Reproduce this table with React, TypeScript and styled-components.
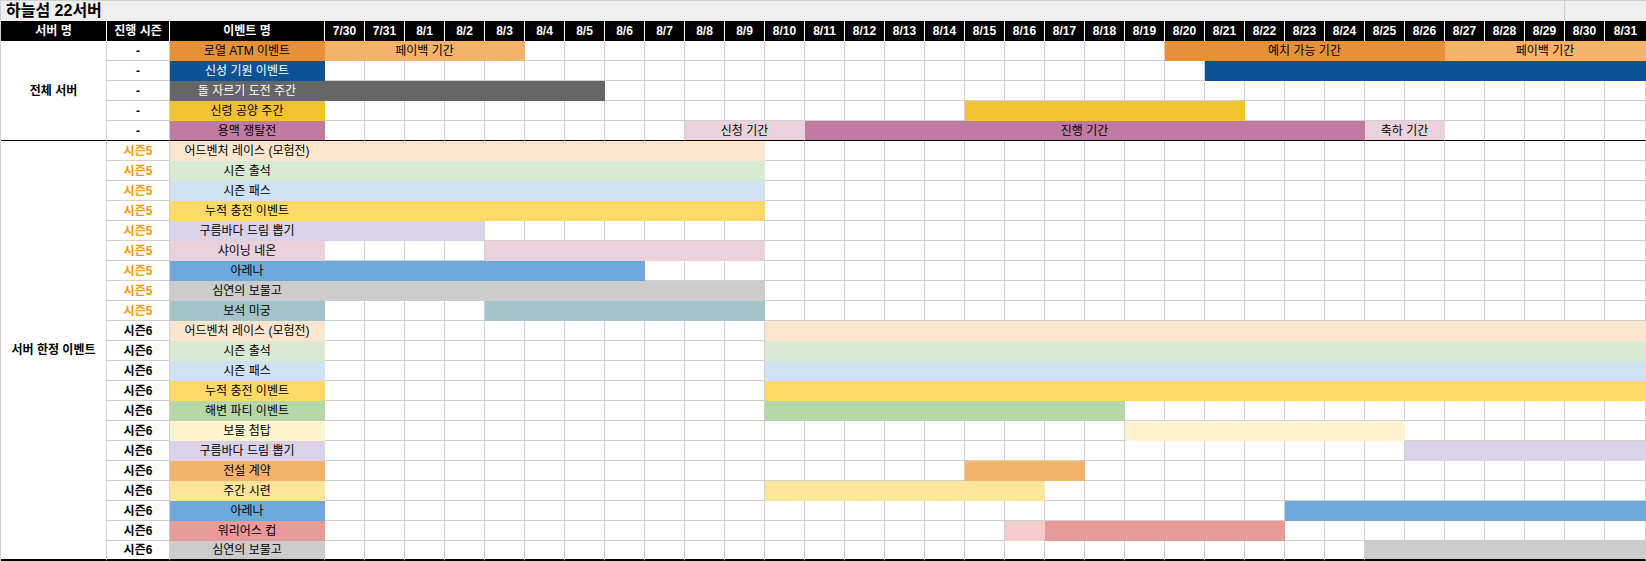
import React from 'react'
import styled, { createGlobalStyle } from 'styled-components'

const DAYS = ['7/30', '7/31', ...Array.from({ length: 31 }, (_, i) => `8/${i + 1}`)]
const at = (day: string) => DAYS.indexOf(day)

const GRID = '#d0d0d0'
const SHEET_COLUMNS = '106px 63px 155px repeat(32, 40px) 41px'
const ROW_COLUMNS = '63px 155px repeat(32, 40px) 41px'

type Span = { from: number; to: number; color: string; label?: string }
type EventRow = { season: string; name: string; color: string; dark?: boolean; spans: Span[] }
type Section = { title: string; events: EventRow[] }

const seg = (from: string, to: string, color: string, label?: string): Span => ({
  from: at(from),
  to: at(to),
  color,
  label,
})

const S5_FULL = (color: string) => [seg('7/30', '8/9', color)]
const S6_FULL = (color: string) => [seg('8/10', '8/31', color)]

const SECTIONS: Section[] = [
  {
    title: '전체 서버',
    events: [
      {
        season: '-',
        name: '로열 ATM 이벤트',
        color: '#e69138',
        spans: [
          seg('7/30', '8/3', '#f6b26b', '페이백 기간'),
          seg('8/20', '8/26', '#e69138', '예치 가능 기간'),
          seg('8/27', '8/31', '#f6b26b', '페이백 기간'),
        ],
      },
      { season: '-', name: '신성 기원 이벤트', color: '#0b5394', dark: true, spans: [seg('8/21', '8/31', '#0b5394')] },
      { season: '-', name: '돌 자르기 도전 주간', color: '#666666', dark: true, spans: [seg('7/30', '8/5', '#666666')] },
      { season: '-', name: '신령 공양 주간', color: '#f1c232', spans: [seg('8/15', '8/21', '#f1c232')] },
      {
        season: '-',
        name: '용맥 쟁탈전',
        color: '#c27ba0',
        spans: [
          seg('8/8', '8/10', '#ead1dc', '신청 기간'),
          seg('8/11', '8/24', '#c27ba0', '진행 기간'),
          seg('8/25', '8/26', '#ead1dc', '축하 기간'),
        ],
      },
    ],
  },
  {
    title: '서버 한정 이벤트',
    events: [
      { season: '시즌5', name: '어드벤처 레이스 (모험전)', color: '#fce5cd', spans: S5_FULL('#fce5cd') },
      { season: '시즌5', name: '시즌 출석', color: '#d9ead3', spans: S5_FULL('#d9ead3') },
      { season: '시즌5', name: '시즌 패스', color: '#cfe2f3', spans: S5_FULL('#cfe2f3') },
      { season: '시즌5', name: '누적 충전 이벤트', color: '#ffd966', spans: S5_FULL('#ffd966') },
      { season: '시즌5', name: '구름바다 드림 뽑기', color: '#d9d2e9', spans: [seg('7/30', '8/2', '#d9d2e9')] },
      { season: '시즌5', name: '샤이닝 네온', color: '#ead1dc', spans: [seg('8/3', '8/9', '#ead1dc')] },
      { season: '시즌5', name: '아레나', color: '#6fa8dc', spans: [seg('7/30', '8/6', '#6fa8dc')] },
      { season: '시즌5', name: '심연의 보물고', color: '#cccccc', spans: S5_FULL('#cccccc') },
      { season: '시즌5', name: '보석 미궁', color: '#a2c4c9', spans: [seg('8/3', '8/9', '#a2c4c9')] },
      { season: '시즌6', name: '어드벤처 레이스 (모험전)', color: '#fce5cd', spans: S6_FULL('#fce5cd') },
      { season: '시즌6', name: '시즌 출석', color: '#d9ead3', spans: S6_FULL('#d9ead3') },
      { season: '시즌6', name: '시즌 패스', color: '#cfe2f3', spans: S6_FULL('#cfe2f3') },
      { season: '시즌6', name: '누적 충전 이벤트', color: '#ffd966', spans: S6_FULL('#ffd966') },
      { season: '시즌6', name: '해변 파티 이벤트', color: '#b6d7a8', spans: [seg('8/10', '8/18', '#b6d7a8')] },
      { season: '시즌6', name: '보물 첨탑', color: '#fff2cc', spans: [seg('8/19', '8/25', '#fff2cc')] },
      { season: '시즌6', name: '구름바다 드림 뽑기', color: '#d9d2e9', spans: [seg('8/26', '8/31', '#d9d2e9')] },
      { season: '시즌6', name: '전설 계약', color: '#f6b26b', spans: [seg('8/15', '8/17', '#f6b26b')] },
      { season: '시즌6', name: '주간 시련', color: '#ffe599', spans: [seg('8/10', '8/16', '#ffe599')] },
      { season: '시즌6', name: '아레나', color: '#6fa8dc', spans: [seg('8/23', '8/31', '#6fa8dc')] },
      {
        season: '시즌6',
        name: '워리어스 컵',
        color: '#ea9999',
        spans: [seg('8/16', '8/16', '#f4cccc'), seg('8/17', '8/22', '#ea9999')],
      },
      { season: '시즌6', name: '심연의 보물고', color: '#cccccc', spans: [seg('8/25', '8/31', '#cccccc')] },
    ],
  },
]

// fill the gaps between spans with empty day cells
const layoutDays = (spans: Span[]) => {
  const cells: (Span | null)[] = []
  let day = 0
  spans.forEach((span) => {
    for (; day < span.from; day++) cells.push(null)
    cells.push(span)
    day = span.to + 1
  })
  for (; day < DAYS.length; day++) cells.push(null)
  return cells
}

const GlobalStyle = createGlobalStyle`
  html, body {
    margin: 0;
    background: #fff;
  }
  body {
    font-family: 'Liberation Sans', 'Noto Sans CJK KR', sans-serif;
    font-size: 12px;
    color: #000;
  }
  * {
    box-sizing: border-box;
  }
`

const Sheet = styled.div`
  width: 1646px;
  border-left: 1px solid ${GRID};
  display: flex;
  flex-direction: column;
`

const TitleRow = styled.div`
  display: grid;
  grid-template-columns: ${SHEET_COLUMNS};
  height: 21px;
  background: #efefef;
  border-top: 1px solid ${GRID};
`

const Title = styled.div`
  grid-column: 1 / span 34;
  display: flex;
  align-items: center;
  padding-left: 5px;
  font-size: 16px;
  font-weight: 700;
  line-height: 1;
  border-right: 1px solid ${GRID};
`

const TitleTail = styled.div`
  grid-column: span 2;
`

const HeaderRow = styled.div`
  display: grid;
  grid-template-columns: ${SHEET_COLUMNS};
  height: 20px;
  background: #000;
`

const HeadCell = styled.div`
  display: flex;
  align-items: center;
  justify-content: center;
  color: #fff;
  font-weight: 700;
  line-height: 1;
  border-right: 1px solid #fff;

  &:last-child {
    border-right: none;
  }
`

const Block = styled.div<{ $end?: boolean }>`
  display: grid;
  grid-template-columns: 106px 1fr;
  --edge: ${(p) => (p.$end ? '2px' : '1px')};
`

const GroupLabel = styled.div`
  display: flex;
  align-items: center;
  justify-content: center;
  font-weight: 700;
  line-height: 1;
  border-right: 1px solid ${GRID};
  border-bottom: var(--edge) solid #000;
`

const Rows = styled.div`
  display: flex;
  flex-direction: column;
`

const Row = styled.div`
  display: grid;
  grid-template-columns: ${ROW_COLUMNS};
  height: 20px;

  &:last-child > * {
    border-bottom: var(--edge) solid #000;
  }
`

const Cell = styled.div`
  display: flex;
  align-items: center;
  justify-content: center;
  line-height: 1;
  white-space: nowrap;
  overflow: hidden;
  border-right: 1px solid ${GRID};
  border-bottom: 1px solid ${GRID};
`

const SeasonCell = styled(Cell)<{ $accent?: boolean }>`
  font-weight: 700;
  color: ${(p) => (p.$accent ? '#ff9900' : '#000')};
`

const NameCell = styled(Cell)<{ $bg: string; $dark?: boolean }>`
  background: ${(p) => p.$bg};
  border-color: ${(p) => p.$bg};
  color: ${(p) => (p.$dark ? '#fff' : '#000')};
`

const DayCell = styled(Cell)`
  background: #fff;
`

const Bar = styled(Cell)<{ $bg: string; $span: number }>`
  grid-column: span ${(p) => p.$span};
  background: ${(p) => p.$bg};
  border-color: ${(p) => p.$bg};
`

const App: React.FC = () => (
  <>
    <GlobalStyle />
    <Sheet>
      <TitleRow>
        <Title>하늘섬 22서버</Title>
        <TitleTail />
      </TitleRow>
      <HeaderRow>
        <HeadCell>서버 명</HeadCell>
        <HeadCell>진행 시즌</HeadCell>
        <HeadCell>이벤트 명</HeadCell>
        {DAYS.map((day) => (
          <HeadCell key={day}>{day}</HeadCell>
        ))}
      </HeaderRow>
      {SECTIONS.map((section, si) => (
        <Block key={section.title} $end={si === SECTIONS.length - 1}>
          <GroupLabel>{section.title}</GroupLabel>
          <Rows>
            {section.events.map((event, ei) => (
              // eslint-disable-next-line react/no-array-index-key
              <Row key={ei}>
                <SeasonCell $accent={event.season === '시즌5'}>{event.season}</SeasonCell>
                <NameCell $bg={event.color} $dark={event.dark}>
                  {event.name}
                </NameCell>
                {layoutDays(event.spans).map((cell, ci) =>
                  cell ? (
                    // eslint-disable-next-line react/no-array-index-key
                    <Bar key={ci} $bg={cell.color} $span={cell.to - cell.from + 1}>
                      {cell.label}
                    </Bar>
                  ) : (
                    // eslint-disable-next-line react/no-array-index-key
                    <DayCell key={ci} />
                  ),
                )}
              </Row>
            ))}
          </Rows>
        </Block>
      ))}
    </Sheet>
  </>
)

export default App
